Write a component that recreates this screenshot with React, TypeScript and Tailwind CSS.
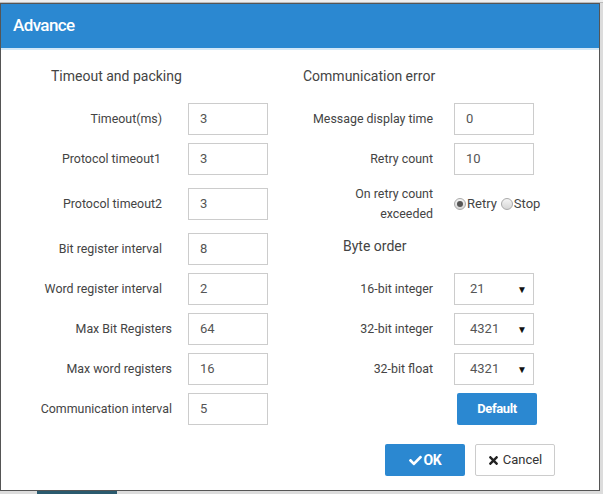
import { FaCheck, FaTimes } from "react-icons/fa";

const font = { fontFamily: "Roboto, 'Liberation Sans', sans-serif" };

function TextRow({
  label,
  value,
  mt,
  pr,
}: {
  label: string;
  value: string;
  mt: string;
  pr: string;
}) {
  return (
    <div className={`flex items-center ${mt}`}>
      <div className={`w-[171px] text-right text-[12.4px] text-[#444] ${pr}`}>{label}</div>
      <div className="ml-[16px] flex h-[32px] w-[80px] items-center border border-[#ccc] pl-[11px] text-[13px] text-[#555]">
        {value}
      </div>
    </div>
  );
}

function RightRow({
  label,
  value,
  mt,
  select,
}: {
  label: string;
  value: string;
  mt: string;
  select?: boolean;
}) {
  return (
    <div className={`flex items-center ${mt}`}>
      <div className="w-[133px] text-right text-[12.4px] text-[#444]">{label}</div>
      <div className="ml-[21px] flex h-[32px] w-[80px] items-center justify-between border border-[#ccc] text-[13px] text-[#555]">
        <span className={select ? "pl-[15px]" : "pl-[11px]"}>{value}</span>
        {select && <span className="pr-[6px] text-[10px] text-[#111]">▼</span>}
      </div>
    </div>
  );
}

function Radio({ checked }: { checked?: boolean }) {
  return (
    <span className="flex h-[12px] w-[12px] items-center justify-center rounded-full border border-[#aaa] bg-gradient-to-b from-[#f4f4f4] to-[#d6d6d6]">
      {checked && <span className="h-[6px] w-[6px] rounded-full bg-[#555]" />}
    </span>
  );
}

export default function App() {
  return (
    <div className="relative h-[494px] w-[603px] overflow-hidden bg-[#dcdcdc]" style={font}>
      <div className="h-[3px] border-b border-[#bbb] bg-[#efefef]" />
      <div className="h-[488px] w-[600px] border border-[#555] bg-white">
        <div className="flex h-[44px] items-center bg-[#2b88d1] pl-[12px] text-[17px] font-medium tracking-[-0.6px] text-white">
          Advance
        </div>
        <div className="h-[2px] bg-[#d3e7f7]" />

        <div className="flex">
          {/* left column */}
          <div className="flex flex-col">
            <div className="ml-[50px] mt-[16px] h-[20px] text-[14px] leading-[20px] text-[#444]">
              Timeout and packing
            </div>
            <TextRow label="Timeout(ms)" value="3" mt="mt-[17px]" pr="pr-[10px]" />
            <TextRow label="Protocol timeout1" value="3" mt="mt-[8px]" pr="pr-[11px]" />
            <TextRow label="Protocol timeout2" value="3" mt="mt-[13px]" pr="pr-[10px]" />
            <TextRow label="Bit register interval" value="8" mt="mt-[13px]" pr="pr-[10px]" />
            <TextRow label="Word register interval" value="2" mt="mt-[8px]" pr="pr-[10px]" />
            <TextRow label="Max Bit Registers" value="64" mt="mt-[8px]" pr="pr-0" />
            <TextRow label="Max word registers" value="16" mt="mt-[8px]" pr="pr-0" />
            <TextRow label="Communication interval" value="5" mt="mt-[8px]" pr="pr-0" />
          </div>

          {/* right column */}
          <div className="ml-[32px] flex flex-col">
            <div className="ml-[3px] mt-[16px] h-[20px] text-[14px] leading-[20px] text-[#444]">
              Communication error
            </div>
            <RightRow label="Message display time" value="0" mt="mt-[17px]" />
            <RightRow label="Retry count" value="10" mt="mt-[8px]" />
            <div className="mt-[9px] flex items-center">
              <div className="w-[133px] text-right text-[12.4px] leading-[20px] text-[#444]">
                On retry count
                <br />
                exceeded
              </div>
              <div className="ml-[21px] flex items-center text-[13px] text-[#444]">
                <Radio checked />
                <span className="ml-[1px]">Retry</span>
                <span className="ml-[4px]">
                  <Radio />
                </span>
                <span className="ml-[1px]">Stop</span>
              </div>
            </div>
            <div className="ml-[43px] mt-[12px] h-[20px] text-[14px] leading-[20px] text-[#444]">
              Byte order
            </div>
            <RightRow label="16-bit integer" value="21" mt="mt-[17px]" select />
            <RightRow label="32-bit integer" value="4321" mt="mt-[8px]" select />
            <RightRow label="32-bit float" value="4321" mt="mt-[8px]" select />
            <div className="mt-[8px] flex">
              <button className="ml-[157px] h-[32px] w-[80px] rounded-[2px] bg-[#2b88d1] text-[13px] font-bold tracking-[-0.4px] text-white">
                Default
              </button>
            </div>
          </div>
        </div>

        <div className="mt-[19px] flex gap-[10px] pl-[384px]">
          <button className="flex h-[32px] w-[80px] items-center justify-center gap-[2px] rounded-[2px] bg-[#2b88d1] text-[14px] font-bold tracking-[-0.4px] text-white">
            <FaCheck className="h-[13px] w-[13px]" />
            OK
          </button>
          <button className="flex h-[32px] w-[80px] items-center justify-center gap-[4px] rounded-[2px] border border-[#ccc] bg-white text-[13px] text-[#333]">
            <FaTimes className="h-[13px] w-[11px] text-[#222]" />
            Cancel
          </button>
        </div>
      </div>
      <div className="ml-[37px] h-[3px] w-[80px] bg-[#2a5a6e]" />
    </div>
  );
}
